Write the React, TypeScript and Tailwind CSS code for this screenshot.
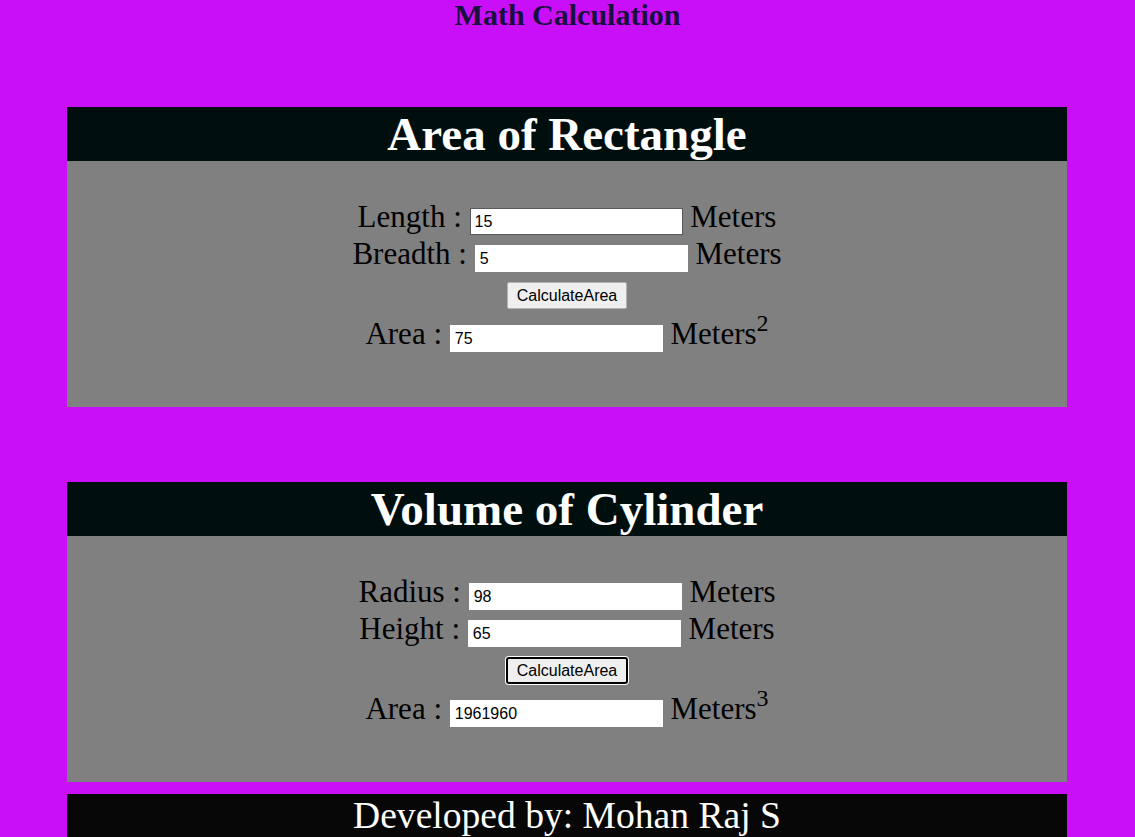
const serif = "font-['Liberation_Serif','Times_New_Roman',serif]";
const sans = "font-['Liberation_Sans',Arial,sans-serif]";

type Row = { label: string; value: string; border?: boolean };

const Field = ({ label, value, border }: Row) => (
    <div className="leading-[37px] h-[37px] whitespace-nowrap">
        {label} :{" "}
        <input
            readOnly
            value={value}
            className={`${sans} w-[213px] h-[27px] text-[16px] px-[4px] bg-white text-black align-baseline outline-none ${border ? "border border-[#5a5a5a]" : "border border-white"}`}
        />{" "}
        Meters
    </div>
);

const Card = ({ title, rows, result, power, focused }: { title: string; rows: Row[]; result: string; power: string; focused?: boolean }) => (
    <section className="w-[1000px] flex flex-col">
        <div className={`${serif} h-[54px] leading-[54px] bg-[#000e0e] text-white text-center font-bold text-[47px]`}>
            {title}
        </div>
        <div className={`${serif} h-[246px] bg-[#808080] text-black text-[31px] flex flex-col items-center pt-[37px]`}>
            {rows.map((r) => (
                <Field key={r.label} {...r} />
            ))}
            <button
                className={`${sans} mt-[10px] h-[27px] px-[9px] text-[16px] leading-none text-black bg-[#efefef] ${focused ? "border-2 border-black rounded-[3px] shadow-[0_0_0_1px_white]" : "border border-[#b4b4b4] rounded-[2px]"}`}
            >
                CalculateArea
            </button>
            <div className="mt-[6px] leading-[37px] h-[37px] whitespace-nowrap">
                Area :{" "}
                <input
                    readOnly
                    value={result}
                    className={`${sans} w-[213px] h-[27px] text-[16px] px-[4px] bg-white text-black align-baseline outline-none border border-white`}
                />{" "}
                Meters<sup className={`${serif} text-[24px] relative top-[-13px]`}>{power}</sup>
            </div>
        </div>
    </section>
);

export default function App() {
    return (
        <div className="w-[1135px] min-h-[837px] bg-[#c80ff8] overflow-hidden flex flex-col">
            <h2 className={`${serif} h-[30px] leading-[30px] text-center font-bold text-[30px] text-[#16103e]`}>
                Math Calculation
            </h2>
            <div className="ml-[67px] mt-[77px] flex flex-col">
                <Card
                    title="Area of Rectangle"
                    rows={[
                        { label: "Length", value: "15", border: true },
                        { label: "Breadth", value: "5" },
                    ]}
                    result="75"
                    power="2"
                />
                <div className="h-[75px]" />
                <Card
                    title="Volume of Cylinder"
                    rows={[
                        { label: "Radius", value: "98" },
                        { label: "Height", value: "65" },
                    ]}
                    result="1961960"
                    power="3"
                    focused
                />
                <footer className={`${serif} mt-[12px] w-[1000px] h-[60px] bg-[#070707] text-white text-center text-[37.6px] leading-[44px]`}>
                    Developed by: Mohan Raj S
                </footer>
            </div>
        </div>
    );
}
